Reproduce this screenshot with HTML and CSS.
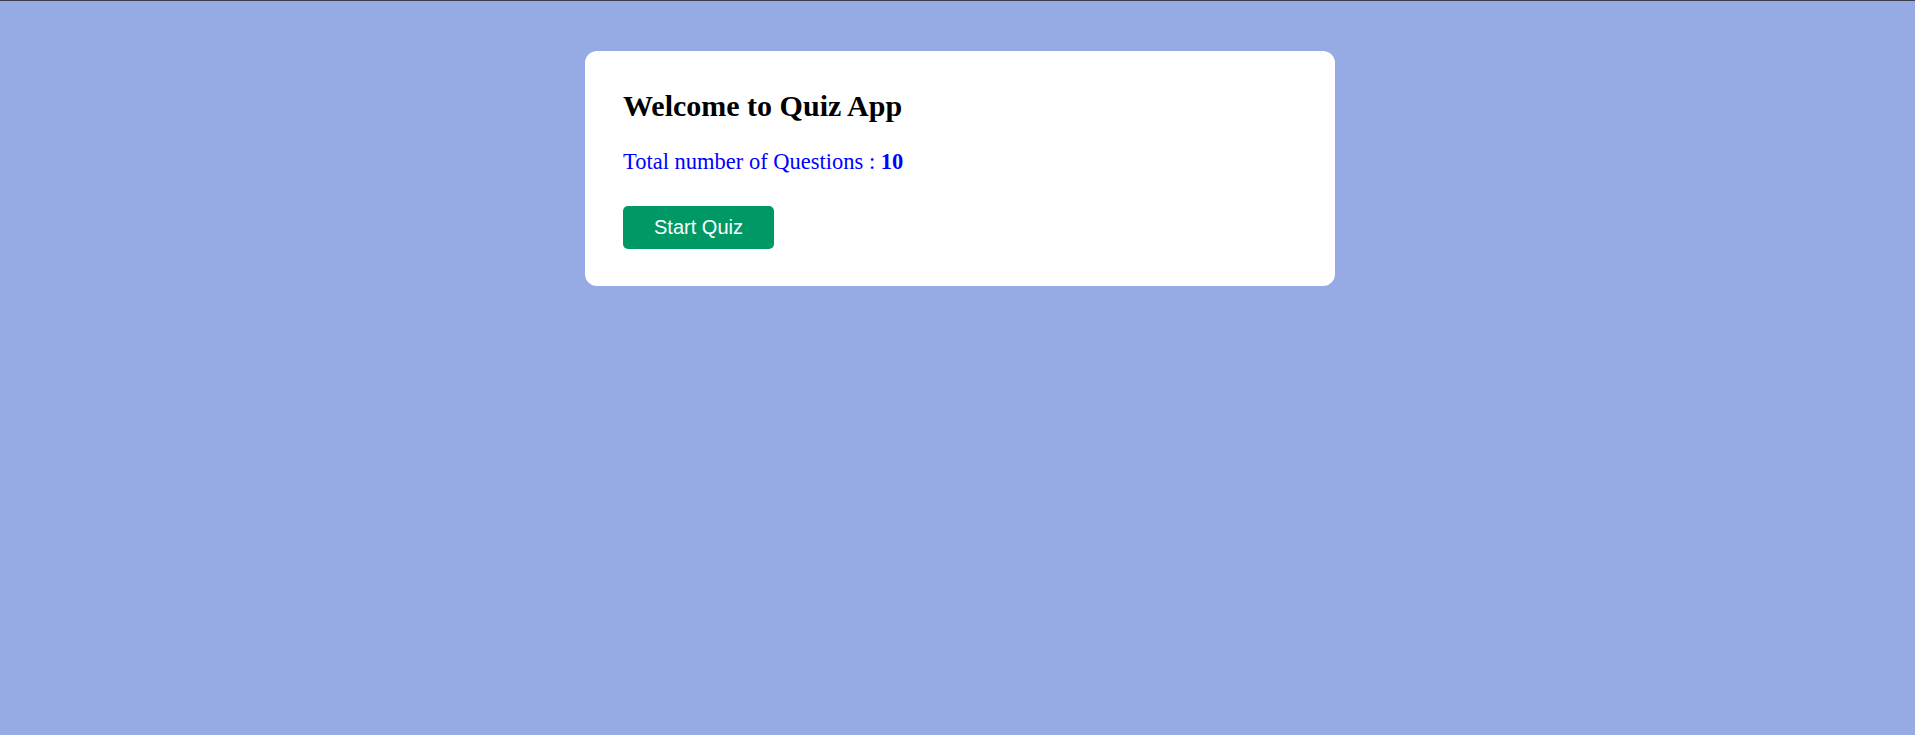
FILE: index.html
```html
<!DOCTYPE html>
<html lang="en">
<head>
<meta charset="utf-8">
<title>Quiz App</title>
<link rel="stylesheet" href="styles.css">
</head>
<body>
<main class="page">
  <section class="card">
    <h2 class="title">Welcome to Quiz App</h2>
    <p class="count">Total number of Questions : <b>10</b></p>
    <button class="start" type="button">Start Quiz</button>
  </section>
</main>
</body>
</html>
```

FILE: styles.css
```css
html, body {
  margin: 0;
  padding: 0;
}
body {
  background: #96aae4;
  border-top: 1px solid #3d3f4a;
  min-height: 734px;
  font-family: "Liberation Serif", "Times New Roman", serif;
}
.page {
  display: flex;
  justify-content: center;
  padding-top: 50px;
  padding-left: 5px;
}
.card {
  width: 750px;
  box-sizing: border-box;
  background: #ffffff;
  border-radius: 12px;
  padding: 38px 38px 37px;
}
.title {
  margin: 0;
  font-size: 30px;
  font-weight: bold;
  color: #000;
  line-height: 1.15;
}
.count {
  margin: 25px 0 0;
  font-size: 22.5px;
  color: #0000ff;
  line-height: 1.15;
}
.count b {
  font-weight: bold;
}
.start {
  margin-top: 32px;
  width: 151px;
  height: 43px;
  border: none;
  border-radius: 5px;
  background: #009966;
  color: #ffffff;
  font-family: "Liberation Sans", Arial, sans-serif;
  font-size: 20px;
  padding: 0;
  display: block;
}
```
